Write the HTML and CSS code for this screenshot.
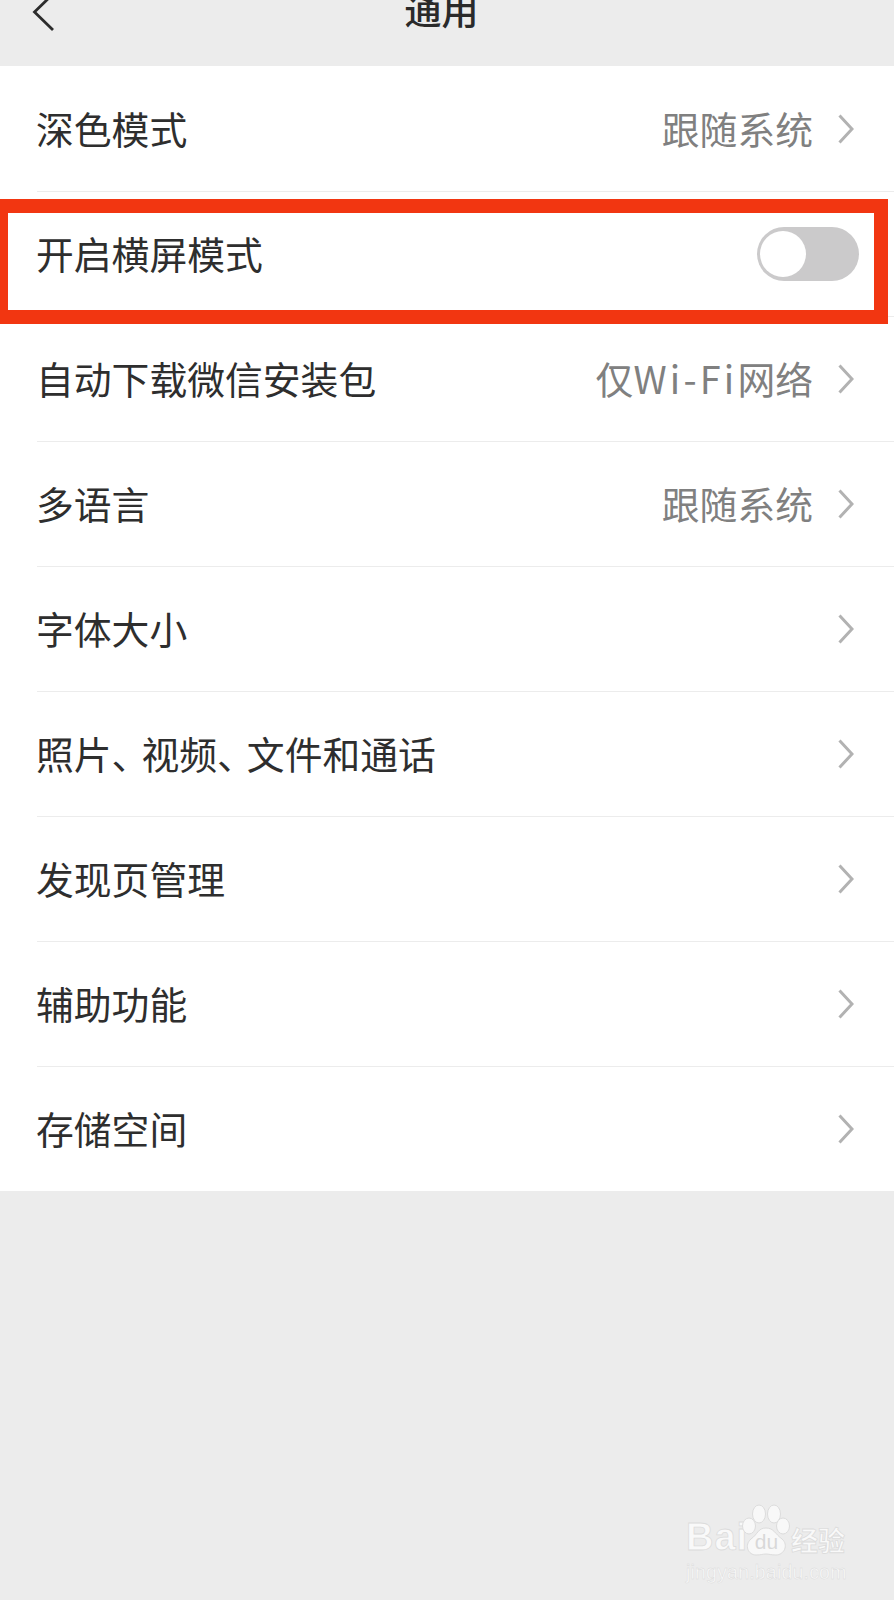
FILE: index.html
```html
<!DOCTYPE html>
<html lang="zh-CN">
<head>
<meta charset="utf-8">
<title>通用</title>
<link rel="stylesheet" href="styles.css">
</head>
<body>
<div class="page">
  <header class="nav">
    <svg class="back" width="24" height="34" viewBox="0 0 24 34"><path d="M21 -6 L2.500 12 L21 30" fill="none" stroke="#2c2c2c" stroke-width="2.800"/></svg>
    <h1 class="title">通用</h1>
  </header>
  <main class="list">
    <div class="row"><span class="label">深色模式</span><span class="value">跟随系统</span><svg class="chev" width="16" height="30" viewBox="0 0 16 30"><path d="M1.500 1.500 L14 15 L1.500 28.500" fill="none" stroke="#b2b2b2" stroke-width="3"/></svg></div>
    <div class="row"><span class="label">开启横屏模式</span><span class="toggle"><span class="knob"></span></span></div>
    <div class="row"><span class="label">自动下载微信安装包</span><span class="value">仅<span class="latin">Wi-Fi</span>网络</span><svg class="chev" width="16" height="30" viewBox="0 0 16 30"><path d="M1.500 1.500 L14 15 L1.500 28.500" fill="none" stroke="#b2b2b2" stroke-width="3"/></svg></div>
    <div class="row"><span class="label">多语言</span><span class="value">跟随系统</span><svg class="chev" width="16" height="30" viewBox="0 0 16 30"><path d="M1.500 1.500 L14 15 L1.500 28.500" fill="none" stroke="#b2b2b2" stroke-width="3"/></svg></div>
    <div class="row"><span class="label">字体大小</span><svg class="chev" width="16" height="30" viewBox="0 0 16 30"><path d="M1.500 1.500 L14 15 L1.500 28.500" fill="none" stroke="#b2b2b2" stroke-width="3"/></svg></div>
    <div class="row"><span class="label">照片<span class="comma">、</span>视频<span class="comma">、</span>文件和通话</span><svg class="chev" width="16" height="30" viewBox="0 0 16 30"><path d="M1.500 1.500 L14 15 L1.500 28.500" fill="none" stroke="#b2b2b2" stroke-width="3"/></svg></div>
    <div class="row"><span class="label">发现页管理</span><svg class="chev" width="16" height="30" viewBox="0 0 16 30"><path d="M1.500 1.500 L14 15 L1.500 28.500" fill="none" stroke="#b2b2b2" stroke-width="3"/></svg></div>
    <div class="row"><span class="label">辅助功能</span><svg class="chev" width="16" height="30" viewBox="0 0 16 30"><path d="M1.500 1.500 L14 15 L1.500 28.500" fill="none" stroke="#b2b2b2" stroke-width="3"/></svg></div>
    <div class="row"><span class="label">存储空间</span><svg class="chev" width="16" height="30" viewBox="0 0 16 30"><path d="M1.500 1.500 L14 15 L1.500 28.500" fill="none" stroke="#b2b2b2" stroke-width="3"/></svg></div>
  </main>
  <div class="highlight"></div>
  <div class="mark">
    <div class="mark-top">
      <span class="mark-bai">Bai</span>
      <svg class="paw" width="48" height="52" viewBox="0 0 48 52">
        <g fill="#f8f8f8" stroke="#dcdcdc" stroke-width="1">
          <ellipse cx="7" cy="22" rx="6.500" ry="8"/>
          <ellipse cx="17" cy="10" rx="6.500" ry="9"/>
          <ellipse cx="32" cy="10" rx="6.500" ry="9"/>
          <ellipse cx="41" cy="22" rx="6.500" ry="8"/>
          <path d="M24 24 C32 24 33 30 40 35 C47 41 42 51 34 51 C29 51 27 50 24 50 C21 50 19 51 14 51 C6 51 2 41 9 35 C16 30 16 24 24 24 Z"/>
        </g>
        <text class="paw-du" x="24.500" y="45" text-anchor="middle">du</text>
      </svg>
      <span class="mark-jy">经验</span>
    </div>
    <div class="mark-url">jingyan.baidu.com</div>
  </div>
</div>
</body>
</html>
```
FILE: styles.css
```css
* { box-sizing: border-box; }
html, body { margin: 0; padding: 0; }
body {
  background: #ececec;
  font-family: "Noto Sans CJK SC", "Noto Sans", sans-serif;
}
.page {
  position: relative;
  width: 894px;
  height: 1600px;
  overflow: hidden;
  background: #ececec;
}
.nav {
  position: relative;
  height: 66px;
  display: flex;
  justify-content: center;
  align-items: flex-start;
}
.back {
  position: absolute;
  left: 32px;
  top: 0;
}
.title {
  margin: -18px 11px 0 0;
  font-size: 37px;
  line-height: 54px;
  font-weight: 500;
  color: #2a2a2a;
}
.list { background: #fff; }
.row {
  display: flex;
  align-items: center;
  height: 125px;
  padding: 0 40px 0 36px;
  position: relative;
}
.row + .row::before {
  content: "";
  position: absolute;
  left: 37px;
  right: 0;
  top: 0;
  height: 1px;
  background: #ececec;
}
.label {
  flex: 1;
  font-size: 37.800px;
  line-height: 50px;
  padding-bottom: 2px;
  color: #2e2e2e;
}
.value {
  font-size: 37.800px;
  line-height: 50px;
  padding-bottom: 2px;
  color: #808080;
  margin-right: 25px;
}
.latin { letter-spacing: 3.200px; }
.comma { letter-spacing: -8px; }
.chev { flex: none; }
.toggle {
  width: 102px;
  height: 54px;
  margin-right: -5px;
  border-radius: 27px;
  background: #cbcacb;
  padding: 4px 3px;
  flex: none;
}
.knob {
  display: block;
  width: 46px;
  height: 46px;
  border-radius: 50%;
  background: #fff;
}
.highlight {
  position: absolute;
  left: 0;
  top: 199px;
  width: 888px;
  height: 125px;
  border: 14.500px solid #f23611;
  border-left-width: 8px;
}
.mark {
  position: absolute;
  left: 686px;
  top: 1504px;
  width: 166px;
  color: #f9f9f9;
}
.mark-top {
  display: flex;
  align-items: flex-end;
  height: 52px;
}
.mark-bai {
  font-family: "Liberation Sans", sans-serif;
  font-size: 38px;
  line-height: 38px;
  font-weight: 700;
  width: 56px;
  letter-spacing: 1px;
  -webkit-text-stroke: 0.8px #dcdcdc;
}
.paw { flex: none; }
.paw-du {
  font-family: "Liberation Sans", sans-serif;
  font-size: 21px;
  font-weight: 400;
  fill: #d8d8d8;
}
.mark-jy {
  font-size: 27px;
  line-height: 32px;
  font-weight: 700;
  margin-left: 1px;
  -webkit-text-stroke: 0.8px #dcdcdc;
}
.mark-url {
  font-family: "Liberation Sans", sans-serif;
  font-size: 19.500px;
  line-height: 22px;
  margin-top: 5px;
  letter-spacing: 0.2px;
  -webkit-text-stroke: 0.4px #d8d8d8;
}
```
